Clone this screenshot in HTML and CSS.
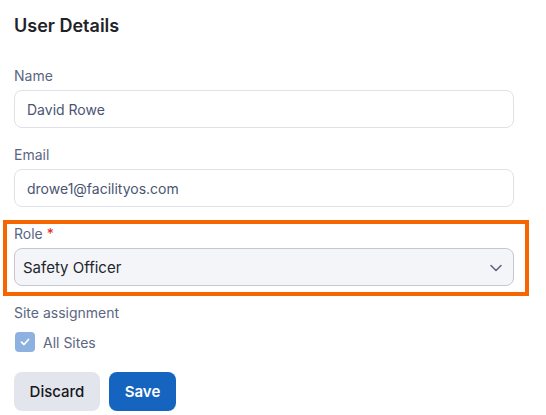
FILE: index.html
```html
<!DOCTYPE html>
<html>
<head>
<meta charset="utf-8">
<link rel="stylesheet" href="styles.css">
</head>
<body>
<div class="page">
  <h2 class="title">User Details</h2>
  <div class="field">
    <label class="label">Name</label>
    <div class="input">David Rowe</div>
  </div>
  <div class="field">
    <label class="label">Email</label>
    <div class="input">drowe1@facilityos.com</div>
  </div>
  <div class="field highlight">
    <label class="label">Role <span class="req">*</span></label>
    <div class="select">
      <span>Safety Officer</span>
      <svg class="chev" width="14" height="14" viewBox="0 0 14 14"><path d="M2 4.5 L7 9.5 L12 4.5" fill="none" stroke="#5b6683" stroke-width="1.6" stroke-linecap="round" stroke-linejoin="round"/></svg>
    </div>
  </div>
  <div class="field">
    <label class="label">Site assignment</label>
    <div class="check-row">
      <span class="checkbox"><svg width="12" height="12" viewBox="0 0 12 12"><path d="M2.5 6.2 L5 8.5 L9.5 3.5" fill="none" stroke="#fff" stroke-width="1.8" stroke-linecap="round" stroke-linejoin="round"/></svg></span>
      <span class="check-label">All Sites</span>
    </div>
  </div>
  <div class="actions">
    <button class="btn btn-secondary">Discard</button>
    <button class="btn btn-primary">Save</button>
  </div>
</div>
</body>
</html>
```
FILE: styles.css
```css
* { box-sizing: border-box; }
html, body { margin: 0; padding: 0; background: #fff; }
body { font-family: Inter, "Noto Sans", sans-serif; }
.page {
  width: 514px;
  padding: 14px 0 0 14px;
  display: flex;
  flex-direction: column;
}
.title {
  margin: 0;
  font-size: 18px;
  font-weight: 600;
  color: #1f2328;
  line-height: 24px;
  margin-bottom: 28px;
}
.field {
  display: flex;
  flex-direction: column;
  gap: 4px;
  margin-bottom: 17px;
}
.label {
  font-size: 14px;
  line-height: 20px;
  color: #5b6683;
}
.req { color: #e02424; }
.input {
  height: 38px;
  border: 1px solid #dfe0e8;
  border-radius: 8px;
  padding: 0 12px;
  display: flex;
  align-items: center;
  font-size: 14px;
  color: #4a5573;
}
.highlight { position: relative; }
.highlight::after {
  content: "";
  position: absolute;
  left: -11px;
  right: -15px;
  top: -4px;
  bottom: -10px;
  border: 4px solid #f56600;
  pointer-events: none;
}
.select {
  height: 38px;
  border: 1px solid #c5c8d4;
  border-radius: 8px;
  background: #f4f5f8;
  padding: 0 10px 0 8px;
  display: flex;
  align-items: center;
  justify-content: space-between;
  font-size: 15px;
  color: #23262d;
}
.chev { margin-top: 1px; }
.check-row {
  display: flex;
  align-items: center;
  gap: 8px;
  height: 22px;
  margin-top: 4px;
  padding-left: 1px;
}
.checkbox {
  width: 20px;
  height: 20px;
  border-radius: 4px;
  background: #8db2df;
  display: flex;
  align-items: center;
  justify-content: center;
}
.check-label {
  font-size: 14px;
  color: #5b6683;
}
.actions {
  display: flex;
  gap: 9px;
  margin-top: 2px;
}
.btn {
  height: 39px;
  border: none;
  border-radius: 8px;
  font-family: Inter, "Noto Sans", sans-serif;
  font-size: 15px;
  font-weight: 500;
  padding: 0 15px;
}
.btn-secondary { background: #e2e5ec; color: #15171b; width: 86px; }
.btn-primary { background: #1565c0; color: #fff; width: 67px; font-weight: 600; }
```
